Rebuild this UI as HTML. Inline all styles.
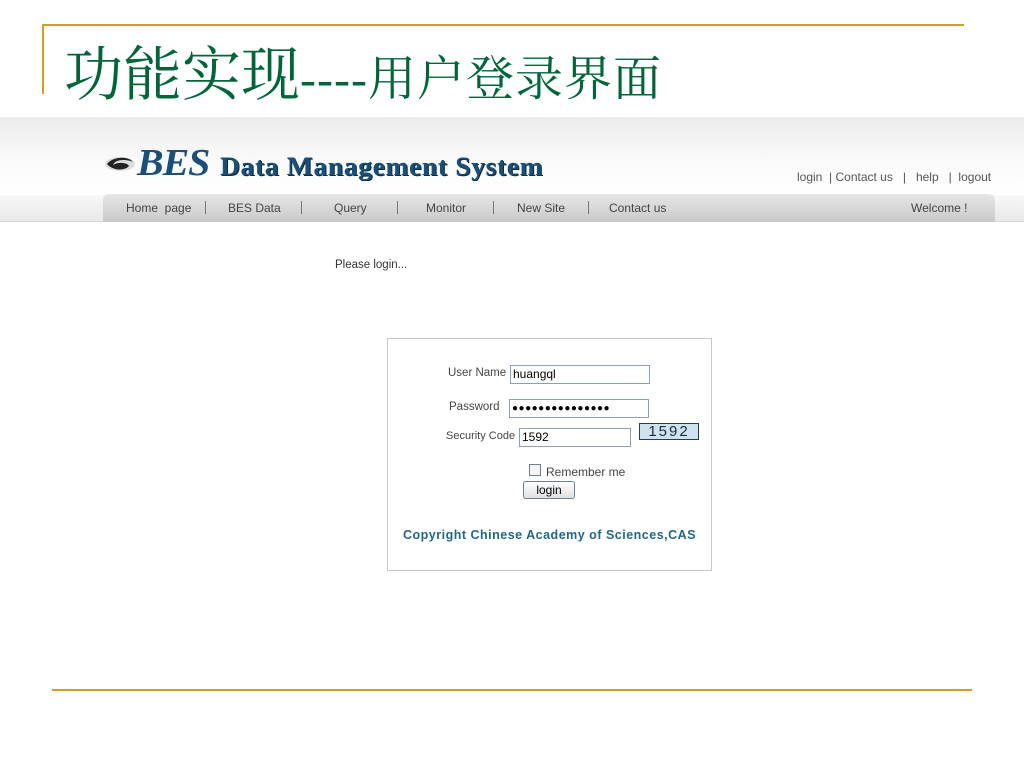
<!DOCTYPE html>
<html><head><meta charset="utf-8"><style>
body{margin:0;width:1024px;height:768px;background:#fff;position:relative;overflow:hidden;font-family:"Liberation Sans",Arial,sans-serif}
.a{position:absolute}
.t{font-family:"Liberation Serif","Noto Serif CJK SC",serif;color:#00663a;white-space:nowrap}
.nav span{position:absolute;top:7px;font-size:12px;color:#444}
.sep{position:absolute;top:7px;width:1px;height:13px;background:#777}
.inp{position:absolute;border:1px solid #8aa0b8;background:#fff;font-size:12px;height:17px;line-height:17px;padding-left:2px;box-sizing:border-box;color:#000}
.lb{position:absolute;font-size:11.5px;color:#444;white-space:nowrap}
</style></head><body>
<div class="a" style="left:42px;top:24px;width:922px;height:2px;background:#d0a020"></div>
<div class="a" style="left:42px;top:24px;width:2px;height:70px;background:#d0a020"></div>
<div class="a t" style="left:64px;top:42px;font-size:59px;line-height:66px">功能实现<span style="font-size:48px;letter-spacing:1px">----用户登录界面</span></div>

<div class="a" style="left:0;top:117px;width:1024px;height:110px;background:linear-gradient(#ececec,#fafafa 40%,#fff 70%)"></div>
<div class="a" style="left:0;top:195px;width:1024px;height:26px;background:linear-gradient(#f8f8f8,#e8e8e8);border-bottom:1px solid #dcdcdc"></div>

<svg class="a" style="left:103px;top:152px" width="34" height="24" viewBox="0 0 34 24"><ellipse cx="17" cy="12" rx="15" ry="7" fill="#ddd"/><path d="M4 12c6-8 22-8 26-2-6-3-18-3-20 3 4-3 14-3 16 1-4 5-16 5-22-2z" fill="#222"/></svg>
<div class="a" style="left:137px;top:141px;font:italic bold 38px 'Liberation Serif',serif;color:#1a4f78;letter-spacing:-1px;line-height:44px;transform:scaleX(1.05);transform-origin:left">BES</div>
<div class="a" style="left:220px;top:151px;font:bold 26px 'Liberation Serif',serif;color:#1a4f78;line-height:32px;text-shadow:1px 1px 0 #0b2a44;letter-spacing:0.6px;white-space:nowrap;transform:scaleX(1.06);transform-origin:left">Data Management System</div>

<div class="a" style="left:797px;top:170px;font-size:12px;color:#555;white-space:nowrap">login &nbsp;| Contact us &nbsp;&nbsp;| &nbsp;&nbsp;help &nbsp;&nbsp;| &nbsp;logout</div>

<div class="a nav" style="left:103px;top:194px;width:892px;height:28px;background:linear-gradient(#e6e6e6,#c9c9c9);border-radius:6px 6px 0 0">
<span style="left:23px">Home &nbsp;page</span><div class="sep" style="left:102px"></div>
<span style="left:125px">BES Data</span><div class="sep" style="left:198px"></div>
<span style="left:231px">Query</span><div class="sep" style="left:294px"></div>
<span style="left:323px">Monitor</span><div class="sep" style="left:390px"></div>
<span style="left:414px">New Site</span><div class="sep" style="left:485px"></div>
<span style="left:506px">Contact us</span>
<span style="left:808px">Welcome !</span>
</div>

<div class="a" style="left:335px;top:259px;font-size:11.5px;color:#333">Please login...</div>

<div class="a" style="left:387px;top:338px;width:323px;height:231px;border:1px solid #c8c8c0;background:#fff"></div>
<div class="lb" style="left:448px;top:367px">User Name</div>
<div class="inp" style="left:510px;top:365px;width:140px;height:19px">huangql</div>
<div class="lb" style="left:449px;top:401px">Password</div>
<div class="inp" style="left:509px;top:399px;width:140px;height:19px;font-size:10px;letter-spacing:0.5px">●●●●●●●●●●●●●●●</div>
<div class="lb" style="left:446px;top:430px;font-size:11px">Security Code</div>
<div class="inp" style="left:519px;top:428px;width:112px;height:19px">1592</div>
<div class="a" style="left:639px;top:423px;width:60px;height:17px;background:#cfe2ef;border:1px solid #2a3a5a;box-sizing:border-box;font:15px 'Liberation Sans',sans-serif;color:#1a2a4a;line-height:15px;text-align:center;letter-spacing:2px">1592</div>
<div class="a" style="left:529px;top:464px;width:12px;height:12px;border:1px solid #6a7f96;box-sizing:border-box;background:#f4f4f4"></div>
<div class="lb" style="left:546px;top:465px;font-size:12px">Remember me</div>
<div class="a" style="left:523px;top:481px;width:52px;height:18px;border:1px solid #6a7f96;border-radius:3px;background:linear-gradient(#fff,#e0e0e0);font-size:12px;text-align:center;line-height:17px;box-sizing:border-box">login</div>
<div class="a" style="left:403px;top:528px;font-size:12.5px;font-weight:bold;color:#22668e;letter-spacing:0.5px;white-space:nowrap">Copyright Chinese Academy of Sciences,CAS</div>

<div class="a" style="left:52px;top:689px;width:920px;height:2px;background:#d0a020"></div>
</body></html>
